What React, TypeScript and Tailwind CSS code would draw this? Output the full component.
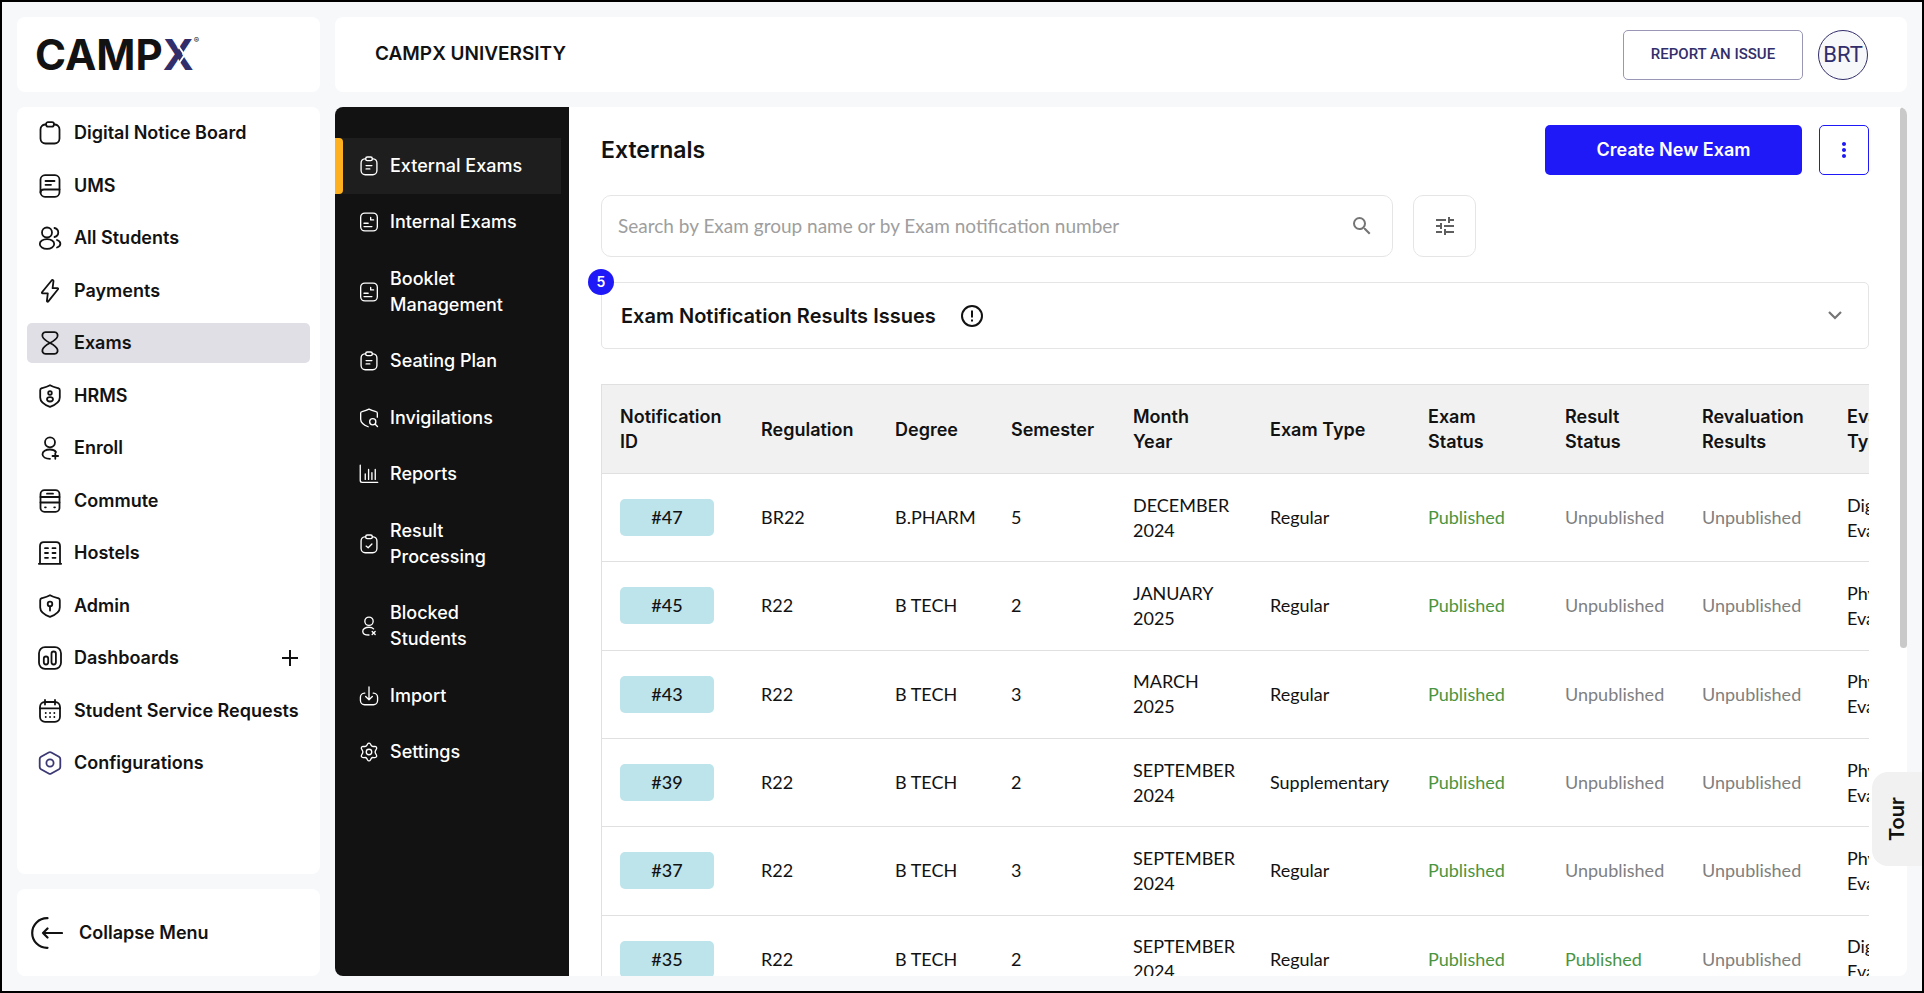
import type { ReactNode } from "react";
import { MdMoreVert, MdSearch, MdTune } from "react-icons/md";

function Icon({ size, children, className = "" }: { size: "lg" | "sm"; children: ReactNode; className?: string }) {
  return (
    <svg
      viewBox="0 0 24 24"
      fill="none"
      stroke="currentColor"
      strokeLinecap="round"
      strokeLinejoin="round"
      strokeWidth={size === "lg" ? 1.8 : 1.6}
      className={`${size === "lg" ? "size-6" : "size-5"} shrink-0 ${className}`}
      aria-hidden="true"
    >
      {children}
    </svg>
  );
}

const clipboardBody = (
  <>
    <path d="M8 3.5H7a5 5 0 0 0-4.5 5v9A5 5 0 0 0 7.5 22.5h9a5 5 0 0 0 5-5v-9a5 5 0 0 0-4.5-5h-1" />
    <rect x="8" y="1.2" width="8" height="4.4" rx="2" />
  </>
);

const shield = <path d="M12 1.2c3 1.8 6 2.4 8.2 2.9 1 .3 1.6 1.1 1.6 2.1v7.3c0 5-5 7.6-9.8 9.3-4.8-1.7-9.8-4.3-9.8-9.3V6.2c0-1 .6-1.8 1.6-2.1C6 3.600 9 3 12 1.2z" />;

const note = (
  <>
    <rect x="2" y="1.3" width="20" height="21.4" rx="5" />
    <path d="M6 13.5h5M6 17.500h9.500M14 6.500v3h3.500" />
  </>
);

const clipNote = (
  <>
    {clipboardBody}
    <path d="M8.5 11.5h7M8.5 15.5h4.5" />
  </>
);

type Item = { label: string; icon: ReactNode; tint?: boolean; expandable?: boolean };

const mainItems: Item[] = [
  { label: "Digital Notice Board", icon: clipboardBody },
  {
    label: "UMS",
    icon: (
      <>
        <rect x="2.5" y="1.2" width="19" height="21.6" rx="4.5" />
        <path d="M2.5 18.5c0-2 1.5-3 3.500-3h15.500M7.500 7h9M7.500 10.800h5.500" />
      </>
    ),
  },
  {
    label: "All Students",
    icon: (
      <>
        <circle cx="9" cy="6.5" r="5" />
        <ellipse cx="9" cy="18" rx="7.2" ry="4.8" />
        <path d="M16.500 2c5 1.200 5 7.800 0 9M19 14c4.500 1.500 4.500 6 0 7.500" />
      </>
    ),
  },
  { label: "Payments", icon: <path d="M13.800 1.200 4 13.300c-.3.500 0 1 .5 1h5.300l-.9 7.600c0 .9.900 1.200 1.400.5L20 10.200c.3-.5 0-1-.5-1h-4.900l.9-7.300c0-.900-1.100-1.300-1.700-.7z" /> },
  {
    label: "Exams",
    icon: (
      <>
        <path d="M7.500 1.200h9c2.500 0 3.500 2 3 4.200C18.700 8.500 12 12 12 12S5.300 8.500 4.500 5.400c-.5-2.200.5-4.200 3-4.200z" />
        <path d="M7.500 22.800h9c2.500 0 3.500-2 3-4.200C18.700 15.500 12 12 12 12s-6.700 3.500-7.500 6.600c-.5 2.200.5 4.200 3 4.200z" />
      </>
    ),
  },
  {
    label: "HRMS",
    icon: (
      <>
        {shield}
        <circle cx="12" cy="9" r="1.8" />
        <ellipse cx="12" cy="15.3" rx="3" ry="2.2" />
      </>
    ),
  },
  {
    label: "Enroll",
    icon: (
      <>
        <circle cx="12" cy="6.3" r="5" />
        <path d="M18 16c-1.200-1.600-3.400-2.500-6-2.500-4.200 0-7.500 2-7.500 4.700 0 2.600 3 4.600 7.500 4.600M17.300 17.200v5.600M14.500 20h5.600" />
      </>
    ),
  },
  {
    label: "Commute",
    icon: (
      <>
        <rect x="2.5" y="1.2" width="19" height="21.6" rx="4" />
        <path d="M2.500 8h19M2.500 13.500h19M9 4.700h6M7 18.300h.8M16.200 18.300h.8" />
      </>
    ),
  },
  {
    label: "Hostels",
    icon: (
      <>
        <path d="M2 22.500V5c0-2.400 1.400-3.800 3.800-3.800h12.400C20.600 1.200 22 2.600 22 5v17.500M.8 22.800h22.400" />
        <path d="M7 7.200h3M14.500 7.200h3M7 12h3M14.500 12h3M7 16.800h3M14.500 16.800h3" />
      </>
    ),
  },
  {
    label: "Admin",
    icon: (
      <>
        {shield}
        <circle cx="12" cy="10" r="2.3" />
        <path d="M12 12.500v4" />
      </>
    ),
  },
  {
    label: "Dashboards",
    expandable: true,
    icon: (
      <>
        <rect x="1" y="1.2" width="22" height="21.6" rx="6" />
        <rect x="5.8" y="10.5" width="4.4" height="8" rx="2.2" />
        <rect x="13.5" y="5.5" width="4.4" height="13" rx="2.2" />
      </>
    ),
  },
  {
    label: "Student Service Requests",
    icon: (
      <>
        <rect x="2" y="3" width="20" height="19.8" rx="5" />
        <path d="M7 1v4.500M17 1v4.500M2 9.300h20" />
        <path d="M7.700 14h.1M12 14h.1M16.300 14h.1M7.700 18h.1M12 18h.1M16.300 18h.1" />
      </>
    ),
  },
  {
    label: "Configurations",
    tint: true,
    icon: (
      <>
        <path d="M10.700 1.500a2.600 2.600 0 0 1 2.600 0l7.700 4.300c.8.500 1.300 1.300 1.300 2.200v8c0 .9-.5 1.700-1.300 2.200l-7.700 4.300a2.600 2.600 0 0 1-2.600 0L3 18.200c-.8-.5-1.300-1.300-1.300-2.200V8c0-.9.500-1.700 1.300-2.200z" />
        <circle cx="12" cy="12" r="3.6" />
      </>
    ),
  },
];

const examItems: Item[] = [
  { label: "External Exams", icon: clipNote },
  { label: "Internal Exams", icon: note },
  { label: "Booklet Management", icon: note },
  { label: "Seating Plan", icon: clipNote },
  {
    label: "Invigilations",
    icon: (
      <>
        <path d="M11 22.500C6 20.500 2 18 2 13.500V6.300c0-1 .6-1.800 1.600-2C6.500 3.600 9 3 12 1.300c3 1.700 5.500 2.300 8.400 3 1 .2 1.600 1 1.600 2V11" />
        <circle cx="16.5" cy="16.5" r="3.7" />
        <path d="m19.500 19.500 2.700 2.700" />
      </>
    ),
  },
  { label: "Reports", icon: <path d="M1.500 1.500v18.300c0 1.400.8 2.200 2.200 2.200h18.800M7.500 12v6.500M11.500 6.500v12M15.500 10.500v8M19.500 6.500v12" /> },
  {
    label: "Result Processing",
    icon: (
      <>
        {clipboardBody}
        <path d="m8.500 14.500 2.500 2 4.500-4.500" />
      </>
    ),
  },
  {
    label: "Blocked Students",
    icon: (
      <>
        <circle cx="12" cy="6.3" r="5" />
        <path d="M17.500 15.500c-1.200-1.300-3.200-2-5.500-2-4.200 0-7.500 2-7.500 4.700 0 2.600 3 4.600 7.500 4.600M15.800 18.500l3.600 3.800M19.400 18.500l-3.600 3.800" />
      </>
    ),
  },
  {
    label: "Import",
    icon: <path d="M12 1v15M8 12.500l4 4 4-4M7 8.500H6.500A5 5 0 0 0 1.700 13.500v4a5 5 0 0 0 5 5h10.600a5 5 0 0 0 5-5v-4a5 5 0 0 0-4.800-5H17" />,
  },
  {
    label: "Settings",
    icon: (
      <>
        <path d="M10.300 2.400c.8-1.500 2.600-1.500 3.400 0l.9 1.700c.5.900 1.500 1.400 2.500 1.300l2-.1c1.700 0 2.700 1.600 1.800 3.100l-1.100 1.900c-.6 1-.6 2.400 0 3.400l1.100 1.900c.9 1.500-.1 3.100-1.800 3.100l-2-.1c-1-.1-2 .4-2.500 1.300l-.9 1.700c-.8 1.500-2.600 1.500-3.400 0l-.9-1.700c-.5-.9-1.500-1.400-2.500-1.300l-2 .1c-1.700 0-2.700-1.600-1.800-3.100l1.100-1.900c.6-1 .6-2.400 0-3.400L3.100 8.400c-.9-1.500.1-3.100 1.800-3.100l2 .1c1 .1 2-.4 2.500-1.300z" />
        <circle cx="12" cy="12" r="3.3" />
      </>
    ),
  },
];

const columns = [
  { title: ["Notification", "ID"], width: "w-[141px]" },
  { title: ["Regulation"], width: "w-[134px]" },
  { title: ["Degree"], width: "w-[116px]" },
  { title: ["Semester"], width: "w-[122px]" },
  { title: ["Month", "Year"], width: "w-[137px]" },
  { title: ["Exam Type"], width: "w-[158px]" },
  { title: ["Exam", "Status"], width: "w-[137px]" },
  { title: ["Result", "Status"], width: "w-[137px]" },
  { title: ["Revaluation", "Results"], width: "w-[145px]" },
  { title: ["Evaluation", "Type"], width: "w-[165px]" },
];

type Row = {
  id: string;
  regulation: string;
  degree: string;
  semester: number;
  month: string;
  year: number;
  type: string;
  exam: string;
  result: string;
  revaluation: string;
  evaluation: string;
};

const P = "Published";
const U = "Unpublished";

const rows: Row[] = [
  { id: "#47", regulation: "BR22", degree: "B.PHARM", semester: 5, month: "DECEMBER", year: 2024, type: "Regular", exam: P, result: U, revaluation: U, evaluation: "Digital" },
  { id: "#45", regulation: "R22", degree: "B TECH", semester: 2, month: "JANUARY", year: 2025, type: "Regular", exam: P, result: U, revaluation: U, evaluation: "Physical" },
  { id: "#43", regulation: "R22", degree: "B TECH", semester: 3, month: "MARCH", year: 2025, type: "Regular", exam: P, result: U, revaluation: U, evaluation: "Physical" },
  { id: "#39", regulation: "R22", degree: "B TECH", semester: 2, month: "SEPTEMBER", year: 2024, type: "Supplementary", exam: P, result: U, revaluation: U, evaluation: "Physical" },
  { id: "#37", regulation: "R22", degree: "B TECH", semester: 3, month: "SEPTEMBER", year: 2024, type: "Regular", exam: P, result: U, revaluation: U, evaluation: "Physical" },
  { id: "#35", regulation: "R22", degree: "B TECH", semester: 2, month: "SEPTEMBER", year: 2024, type: "Regular", exam: P, result: P, revaluation: U, evaluation: "Digital" },
];

function Status({ value }: { value: string }) {
  return <span className={value === P ? "text-[#4a9440]" : "text-[#808080]"}>{value}</span>;
}

function Logo() {
  return (
    <a href="#home" aria-label="CAMPX" className="flex items-center text-[42px] leading-[42px] font-bold text-[#121212]">
      <span>CAMP</span>
      <span className="relative text-[#322e6b]">
        X
        <svg viewBox="0 0 30 32" className="absolute top-[5px] left-0 h-8 w-[30px]" fill="none" stroke="#fff" strokeWidth="1.8" aria-hidden="true">
          <path d="m14 5 7.500 11L14 27" />
        </svg>
      </span>
      <span className="self-start text-[8px] leading-[12px] font-normal">®</span>
    </a>
  );
}

export default function App() {
  return (
    <div className="flex h-screen gap-[15px] overflow-hidden border-2 border-black bg-[#f7f8fa] p-[15px] font-['Inter',sans-serif] text-[#121212]">
      <aside className="flex w-[303px] shrink-0 flex-col gap-[15px]">
        <div className="flex h-[75px] shrink-0 items-center rounded-lg bg-white px-[18px]">
          <Logo />
        </div>
        <nav className="min-h-0 flex-1 overflow-hidden rounded-lg bg-white px-[10px] py-[6px]" aria-label="Main">
          <ul className="flex h-[670px] flex-col justify-between">
            {mainItems.map((item) => (
              <li key={item.label}>
                <a
                  href="#module"
                  className={`flex h-10 items-center gap-3 rounded-[5px] pl-[11px] text-lg font-semibold ${item.label === "Exams" ? "bg-[#dfdfe5]" : ""}`}
                >
                  <Icon size="lg" className={item.tint ? "text-[#3b3874]" : ""}>
                    {item.icon}
                  </Icon>
                  <span className="whitespace-nowrap">{item.label}</span>
                  {item.expandable && (
                    <svg viewBox="0 0 18 18" className="mr-[11px] ml-auto size-[18px]" stroke="currentColor" strokeWidth="2" aria-hidden="true">
                      <path d="M9 1v16M1 9h16" />
                    </svg>
                  )}
                </a>
              </li>
            ))}
          </ul>
        </nav>
        <button type="button" className="flex h-[87px] shrink-0 items-center gap-4 rounded-lg bg-white pl-[14px] text-lg font-semibold">
          <svg viewBox="0 0 32 32" className="size-8" fill="none" stroke="currentColor" strokeWidth="2.2" strokeLinecap="round" strokeLinejoin="round" aria-hidden="true">
            <path d="M16.500 1.200h-.5C8 1.200 1.200 7.500 1.200 16S8 30.800 16 30.800h.5M31 16H12M16.500 11.500 12 16l4.500 4.500" />
          </svg>
          Collapse Menu
        </button>
      </aside>

      <div className="flex min-w-0 flex-1 flex-col gap-[15px]">
        <header className="flex h-[75px] shrink-0 items-center justify-between rounded-lg bg-white pr-[39px] pl-10">
          <h1 className="text-[19px] font-semibold">CAMPX UNIVERSITY</h1>
          <div className="flex items-center gap-[15px] font-['Roboto',sans-serif] text-[#322e6b]">
            <button type="button" className="h-[50px] w-[180px] rounded-[5px] border border-[#9997b5] text-[15px] font-medium">
              REPORT AN ISSUE
            </button>
            <button type="button" className="flex size-[50px] items-center justify-center rounded-full border border-[#322e6b] bg-[#f7f8fa] text-[22px]">
              BRT
            </button>
          </div>
        </header>

        <div className="relative flex min-h-0 flex-1 overflow-hidden rounded-lg bg-white">
          <nav className="w-[234px] shrink-0 bg-[#121212] pt-[31px] pr-2 text-white" aria-label="Exams">
            <ul className="flex h-[642px] flex-col justify-between">
              {examItems.map((item, i) => (
                <li key={item.label}>
                  <a href="#section" className={`relative flex items-center gap-[11px] py-[15px] pl-6 text-lg leading-[26px] font-medium ${i === 0 ? "bg-[#1e1e1e]" : ""}`}>
                    {i === 0 && <span className="absolute inset-y-0 left-0 w-2 rounded-r bg-[#ffb01f]" />}
                    <Icon size="sm">{item.icon}</Icon>
                    <span className="w-[138px]">{item.label}</span>
                  </a>
                </li>
              ))}
            </ul>
          </nav>

          <main className="min-w-0 flex-1 overflow-x-hidden overflow-y-auto pt-[18px] pr-[38px] pl-8 [scrollbar-width:none]">
            <div className="flex items-center justify-between">
              <h2 className="text-[23px] font-semibold">Externals</h2>
              <div className="flex gap-[17px]">
                <button type="button" className="h-[50px] w-[257px] rounded-[5px] bg-[#1f19f7] text-lg font-semibold text-white">
                  Create New Exam
                </button>
                <button type="button" aria-label="More actions" className="flex size-[50px] items-center justify-center rounded-[5px] border border-[#1f19f7] text-[#1f19f7]">
                  <MdMoreVert className="size-6" />
                </button>
              </div>
            </div>

            <div className="mt-5 flex items-center gap-5">
              <label className="flex h-[62px] w-full max-w-[792px] items-center rounded-[10px] border border-[#e5e5e5] pr-[18px] pl-4">
                <input
                  type="search"
                  aria-label="Search exams"
                  placeholder="Search by Exam group name or by Exam notification number"
                  className="min-w-0 flex-1 font-['Lato',sans-serif] text-[19px] outline-none placeholder:text-[#9e9e9e]"
                />
                <MdSearch className="size-6 text-[#757575]" />
              </label>
              <button type="button" aria-label="Filters" className="flex h-[62px] w-[63px] shrink-0 items-center justify-center rounded-[10px] border border-[#e5e5e5] text-[#5f5f5f]">
                <MdTune className="size-6" />
              </button>
            </div>

            <div className="relative mt-[25px]">
              <button type="button" aria-expanded="false" className="flex h-[67px] w-full items-center rounded-[5px] border border-[#e5e5e5] pr-[26px] pl-[19px]">
                <span className="text-xl font-semibold">Exam Notification Results Issues</span>
                <svg viewBox="0 0 24 24" className="ml-6 size-6" fill="none" stroke="currentColor" strokeWidth="2" aria-hidden="true">
                  <circle cx="12" cy="12" r="10" />
                  <path d="M12 6.500v7M12 15.500v2" />
                </svg>
                <svg viewBox="0 0 14 9" className="ml-auto h-[9px] w-[14px]" fill="none" stroke="#757575" strokeWidth="2.2" aria-hidden="true">
                  <path d="m1 1 6 6 6-6" />
                </svg>
              </button>
              <span className="absolute top-0 left-0 flex size-[26px] -translate-1/2 items-center justify-center rounded-full bg-[#1f19f7] text-sm font-semibold text-white">5</span>
            </div>

            <div className="mt-[35px] overflow-x-auto border-l border-[#e0e0e0] [scrollbar-width:none]">
              <table className="h-[620px] w-full min-w-[1392px] table-fixed border-collapse text-left text-lg leading-[25px]">
                <thead>
                  <tr className="h-[89px] border-y border-[#e0e0e0] bg-[#f1f1f1]">
                    {columns.map((col) => (
                      <th key={col.title.join(" ")} scope="col" className={`${col.width} pl-[18px] font-semibold`}>
                        {col.title.map((line) => (
                          <span key={line} className="block">
                            {line}
                          </span>
                        ))}
                      </th>
                    ))}
                  </tr>
                </thead>
                <tbody className="font-['Lato',sans-serif]">
                  {rows.map((row) => (
                    <tr key={row.id} className="border-b border-[#e0e0e0]">
                      <td className="pl-[18px]">
                        <a href="#exam" className="flex h-[37px] w-[94px] items-center justify-center rounded-[5px] bg-[#bde3eb] font-medium">
                          {row.id}
                        </a>
                      </td>
                      <td className="pl-[18px]">{row.regulation}</td>
                      <td className="pl-[18px]">{row.degree}</td>
                      <td className="pl-[18px]">{row.semester}</td>
                      <td className="pl-[18px]">
                        <span className="block">{row.month}</span>
                        <span className="block">{row.year}</span>
                      </td>
                      <td className="pl-[18px]">{row.type}</td>
                      <td className="pl-[18px]">
                        <Status value={row.exam} />
                      </td>
                      <td className="pl-[18px]">
                        <Status value={row.result} />
                      </td>
                      <td className="pl-[18px]">
                        <Status value={row.revaluation} />
                      </td>
                      <td className="pl-[18px]">
                        <span className="block">{row.evaluation}</span>
                        <span className="block">Evaluation</span>
                      </td>
                    </tr>
                  ))}
                </tbody>
              </table>
            </div>
          </main>
          <div className="absolute top-0 right-0 h-[541px] w-[7px] rounded bg-[#c9c9c9]" />
        </div>
      </div>

      <button type="button" className="fixed right-[2px] bottom-[127px] flex h-[94px] w-[50px] items-center justify-center rounded-l-2xl bg-[#f1f1f1] text-xl font-semibold">
        <span className="rotate-180 [writing-mode:vertical-rl]">Tour</span>
      </button>
    </div>
  );
}
